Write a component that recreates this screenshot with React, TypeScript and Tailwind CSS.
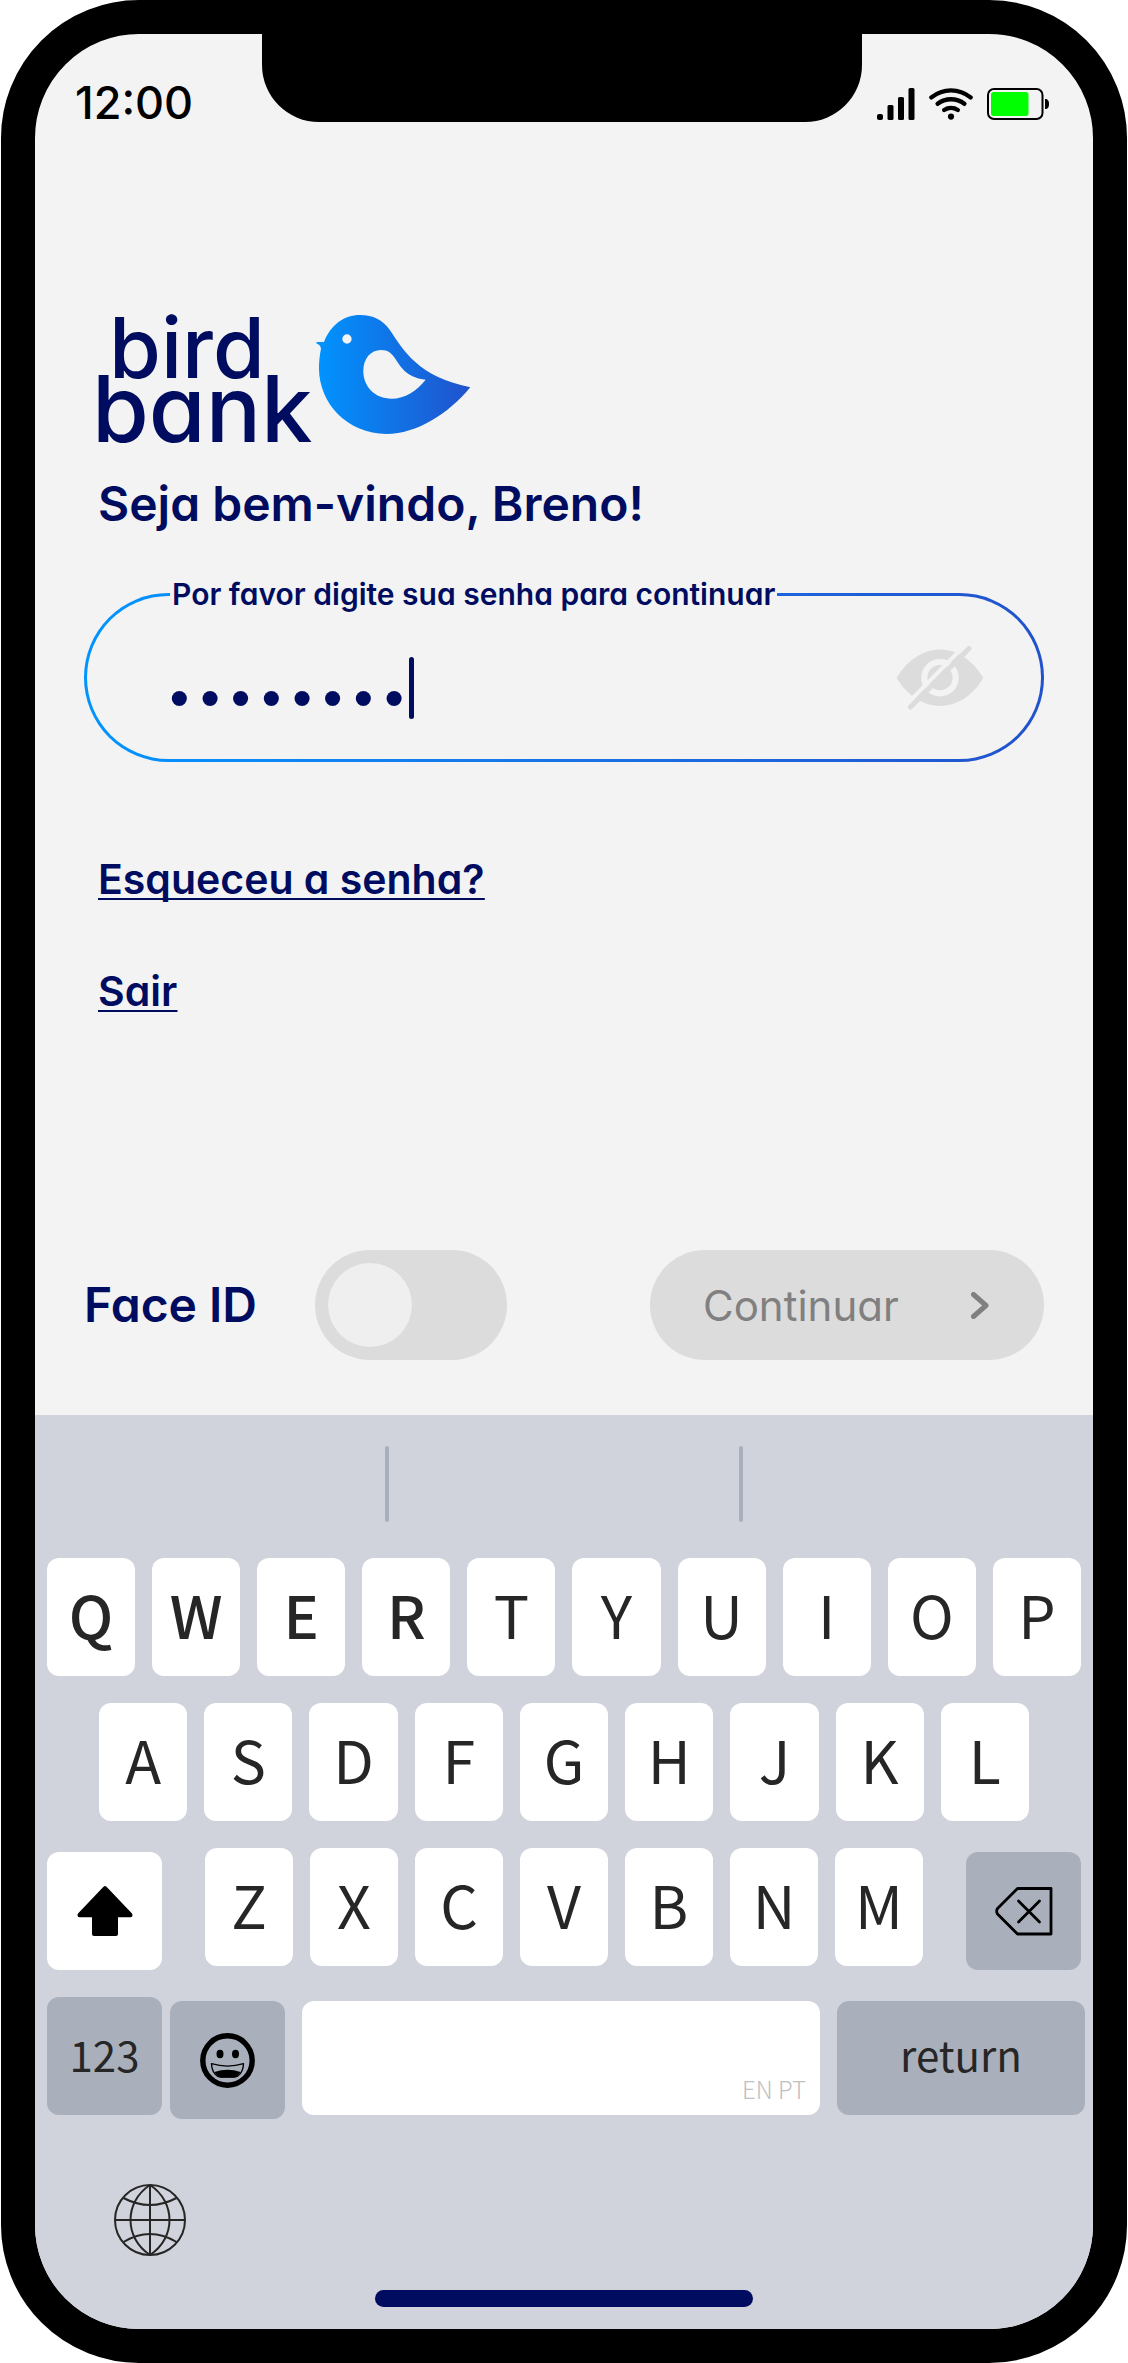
import { useState } from 'react'
import type { ReactNode } from 'react'
import clsx from 'clsx'

const ROW_1 = ['Q', 'W', 'E', 'R', 'T', 'Y', 'U', 'I', 'O', 'P']
const ROW_2 = ['A', 'S', 'D', 'F', 'G', 'H', 'J', 'K', 'L']
const ROW_3 = ['Z', 'X', 'C', 'V', 'B', 'N', 'M']
const HEAVY_KEYS = ['Q', 'W', 'E', 'R']

function SignalIcon() {
  return (
    <svg width="38" height="32" viewBox="0 0 38 32" aria-hidden="true">
      <rect x="0" y="26" width="6" height="6" rx="2" />
      <rect x="10.5" y="17" width="6" height="15" rx="1.5" />
      <rect x="21" y="9" width="6" height="23" rx="1.5" />
      <rect x="31.5" y="0" width="6" height="32" rx="1.5" />
    </svg>
  )
}

function WifiIcon() {
  return (
    <svg width="44" height="32" viewBox="0 0 44 32" fill="none" stroke="#000" strokeWidth="4.4" strokeLinecap="round" aria-hidden="true">
      <path d="M2.4 9.4C14 0 30 0 41.6 9.4" />
      <path d="M8.6 15.8c8-6 18.8-6 26.8 0" />
      <path d="M15.2 22c4-2.6 9.6-2.6 13.6 0" />
      <circle cx="22" cy="28.6" r="3.1" fill="#000" stroke="none" />
    </svg>
  )
}

function BatteryIcon() {
  return (
    <svg width="62" height="32" viewBox="0 0 62 32" aria-hidden="true">
      <rect x="1" y="1" width="54.5" height="30" rx="6" fill="none" stroke="#000" strokeWidth="2" />
      <rect x="4" y="4" width="37.5" height="24" rx="2.5" fill="#00ff00" />
      <path d="M58 11c3 0 4 2 4 5s-1 5-4 5z" />
    </svg>
  )
}

function Logo() {
  return (
    <svg width="373" height="137" viewBox="0 0 373 137" className="overflow-visible" role="img" aria-label="bird bank">
      <defs>
        <linearGradient id="bird" x1="0" y1="0" x2="1" y2="0">
          <stop offset="0" stopColor="#0094ff" />
          <stop offset="1" stopColor="#2152cc" />
        </linearGradient>
      </defs>
      <g fill="#000c5f" className="font-[Inter,sans-serif] font-medium [font-feature-settings:'cv11']">
        <text x="11" y="72" className="text-[84px]">bird</text>
        <text x="-6" y="136" className="text-[92px]">bank</text>
      </g>
      <g transform="translate(-18 -16) scale(.3333)">
        <path
          fill="url(#bird)"
          fillRule="evenodd"
          d="M709 157C716 155 724 156 732 156C752 105 792 75 840 75C880 75 908 90 928 118C972 183 1014 260 1171 292C1105 372 1010 432 920 432C802 432 717 340 717 235C717 215 719 195 723 176C722 168 717 163 709 160ZM850 243C850 206 872 180 903 180C925 180 934 189 948 209C968 240 985 262 1037 269C1010 303 975 326 935 326C885 326 850 290 850 243ZM787 147a14 14 0 1 0 28 0a14 14 0 1 0-28 0Z"
        />
      </g>
    </svg>
  )
}

function EyeOffIcon() {
  return (
    <svg width="86" height="64" viewBox="0 0 86 64" fill="none" aria-hidden="true">
      <path fill="#dcdcdc" d="M.5 33.5Q-.5 32 .5 30.5C11 13.5 27 3.5 43 3.5s32 10 42.5 27q1 1.5 0 3C75 50.5 59 60 43 60S11 50.5 .5 33.5Z" />
      <circle cx="43" cy="31.7" r="18.8" fill="#f3f3f3" />
      <circle cx="43" cy="31.7" r="12.6" fill="#dcdcdc" />
      <path stroke="#f3f3f3" strokeWidth="4" d="M9.5 58.5 69-2" />
      <path stroke="#dcdcdc" strokeWidth="5" strokeLinecap="round" d="M13.5 61 72 2.6" />
    </svg>
  )
}

function ShiftIcon() {
  return (
    <svg width="56" height="50" viewBox="0 0 56 50" aria-hidden="true">
      <path d="M26.5 .8q1.5-1.5 3 0L55 27.5q1.5 3.5-1.5 3.8H41V48q0 2-2 2H17q-2 0-2-2V31.3H2.5Q-.5 31 1 27.5Z" />
    </svg>
  )
}

function BackspaceIcon() {
  return (
    <svg width="58" height="49" viewBox="0 0 58 49" fill="none" stroke="#000" strokeWidth="2.8" strokeLinejoin="round" strokeLinecap="round" aria-hidden="true">
      <path d="M22.5 1.5H56V47H22.5L2.5 27Q.8 24.3 2.5 21.5Z" />
      <path d="m23.5 14 21 21m0-21-21 21" />
    </svg>
  )
}

function EmojiIcon() {
  return (
    <svg width="55" height="55" viewBox="0 0 55 55" aria-hidden="true">
      <circle cx="27.5" cy="27.5" r="24.7" fill="none" stroke="#000" strokeWidth="5.4" />
      <ellipse cx="20" cy="21" rx="3.5" ry="4.2" />
      <ellipse cx="35.5" cy="21" rx="3.5" ry="4.2" />
      <path fill="none" stroke="#000" strokeWidth="1.4" strokeLinejoin="round" d="M11.5 30.7Q27.5 35.5 43.5 30.7C43 40 38 44 34.5 44h-14C17 44 12 40 11.5 30.7Z" />
      <path d="M14.5 39Q27.5 34.5 40.5 39C38 43 36 44.5 33 44.5H22C19 44.5 17 43 14.5 39Z" />
    </svg>
  )
}

function GlobeIcon() {
  return (
    <svg width="72" height="72" viewBox="0 0 72 72" fill="none" stroke="#262626" strokeWidth="2" aria-hidden="true">
      <circle cx="36" cy="36" r="35" />
      <path d="M36 1v70M1 36h70" />
      <path d="M36 1C10 18 10 54 36 71M36 1c26 17 26 53 0 70" />
      <path d="M9.5 14Q36 28 62.5 14M9.5 58Q36 42 62.5 58" />
    </svg>
  )
}

type KeyProps = {
  label?: string
  className?: string
  onClick?: () => void
  children: ReactNode
}

function Key({ label, className, onClick, children }: KeyProps) {
  return (
    <button
      type="button"
      aria-label={label}
      onClick={onClick}
      className={clsx('flex items-center justify-center rounded-xl', className)}
    >
      {children}
    </button>
  )
}

function LetterKeys({ letters, onPress }: { letters: string[]; onPress: (letter: string) => void }) {
  return (
    <div className="flex min-w-0 flex-1 gap-[17px]">
      {letters.map((letter) => (
        <Key
          key={letter}
          onClick={() => onPress(letter)}
          className={clsx(
            'h-[118px] min-w-0 flex-1 bg-white pb-2 text-[59px] leading-none',
            HEAVY_KEYS.includes(letter) && 'font-medium'
          )}
        >
          {letter}
        </Key>
      ))}
    </div>
  )
}

export default function App() {
  const [password, setPassword] = useState('breno123')
  const [visible, setVisible] = useState(false)
  const [faceId, setFaceId] = useState(false)

  const press = (letter: string) => setPassword(password + letter)

  return (
    <div className="bg-white px-px pb-px font-[Inter,sans-serif] text-[#000c5f] [font-feature-settings:'cv11']">
      <div className="overflow-hidden rounded-[138px] border-[34px] border-black bg-[#f3f3f3]">
        <header className="flex h-[88px] text-black">
          <div className="flex min-w-0 flex-1 items-center pt-12 pl-10 text-[45px] leading-none font-medium">12:00</div>
          <div className="w-[600px] rounded-b-[57px] bg-black" />
          <div className="flex min-w-0 flex-1 items-center justify-end gap-[14px] pt-[52px] pr-11">
            <SignalIcon />
            <WifiIcon />
            <BatteryIcon />
          </div>
        </header>

        <main className="px-[49px] pt-[184px] pb-[55px]">
          <div className="px-[14px]">
            <Logo />
            <h1 className="mt-[33px] text-5xl leading-[56px] font-semibold">Seja bem-vindo, Breno!</h1>
          </div>

          <div className="relative mt-[61px] rounded-full bg-linear-to-r from-[#0094ff] to-[#2152cc] p-[3px]">
            <label
              htmlFor="password"
              className="absolute -top-4 left-[86px] bg-[#f3f3f3] px-[2px] text-[30px] leading-[34px] font-semibold whitespace-nowrap"
            >
              Por favor digite sua senha para continuar
            </label>
            <div className="flex h-[163px] items-center justify-between rounded-full bg-[#f3f3f3] pr-[58px] pl-[77px]">
              <div className="flex items-center pt-5">
                <input
                  id="password"
                  type={visible ? 'text' : 'password'}
                  value={password}
                  onChange={(e) => setPassword(e.target.value)}
                  className="h-[88px] bg-transparent pt-6 font-['DejaVu_Sans',sans-serif] text-[52px] caret-transparent outline-none [field-sizing:content]"
                />
                <span className="h-[62px] w-[5px] rounded-full bg-[#000c5f]" />
              </div>
              <button type="button" aria-label="Mostrar senha" onClick={() => setVisible(!visible)}>
                <EyeOffIcon />
              </button>
            </div>
          </div>

          <nav className="mt-[93px] flex flex-col items-start gap-16 px-[14px] text-[41px] leading-[48px] font-semibold underline decoration-2 underline-offset-4 [text-decoration-skip-ink:none]">
            <a href="#senha">Esqueceu a senha?</a>
            <a href="#sair">Sair</a>
          </nav>

          <div className="mt-[235px] flex items-center justify-between">
            <div className="flex items-center gap-[58px]">
              <label htmlFor="face-id" className="text-5xl leading-[56px] font-semibold">
                Face ID
              </label>
              <input
                id="face-id"
                type="checkbox"
                role="switch"
                checked={faceId}
                onChange={(e) => setFaceId(e.target.checked)}
                className="flex h-[110px] w-48 appearance-none items-center rounded-full bg-[#dcdcdc] px-[13px] before:size-[84px] before:rounded-full before:bg-[#efefef] checked:justify-end"
              />
            </div>
            <button
              type="button"
              className="flex h-[110px] w-[394px] items-center justify-between rounded-full bg-[#dcdcdc] pr-[55px] pl-[53px] text-[42px] text-[#808080]"
            >
              Continuar
              <svg width="18" height="27" viewBox="0 0 18 27" fill="none" stroke="#808080" strokeWidth="5" strokeLinecap="round" strokeLinejoin="round" aria-hidden="true">
                <path d="m2.5 2.5 12.5 11-12.5 11" />
              </svg>
            </button>
          </div>
        </main>

        <section
          aria-label="Teclado"
          className="bg-[#d0d3dc] px-3 pt-[31px] pb-[22px] font-['Noto_Sans_CJK_SC',sans-serif] text-[#262626]"
        >
          <div className="-mx-3 flex justify-evenly">
            <span className="h-[76px] w-1 rounded-full bg-[#a9afbb]" />
            <span className="h-[76px] w-1 rounded-full bg-[#a9afbb]" />
          </div>

          <div className="mt-9 flex flex-col gap-[27px]">
            <div className="flex">
              <LetterKeys letters={ROW_1} onPress={press} />
            </div>
            <div className="flex px-[52px]">
              <LetterKeys letters={ROW_2} onPress={press} />
            </div>
            <div className="flex h-[122px] gap-[43px]">
              <Key label="Shift" className="h-[118px] w-[115px] self-end bg-white">
                <ShiftIcon />
              </Key>
              <LetterKeys letters={ROW_3} onPress={press} />
              <Key
                label="Apagar"
                onClick={() => setPassword(password.slice(0, -1))}
                className="h-[118px] w-[115px] self-end bg-[#a9afbb]"
              >
                <BackspaceIcon />
              </Key>
            </div>
            <div className="-mr-1 flex h-[122px] gap-[17px] text-[42px] leading-none">
              <div className="flex gap-2">
                <Key className="h-[118px] w-[115px] bg-[#a9afbb] pb-1">123</Key>
                <Key label="Emoji" className="h-[118px] w-[115px] self-end bg-[#a9afbb]">
                  <EmojiIcon />
                </Key>
              </div>
              <button
                type="button"
                onClick={() => press(' ')}
                className="flex h-[114px] flex-1 items-end justify-end self-center rounded-xl bg-white px-[14px] pb-[14px] text-2xl leading-none font-light text-[#c0c0c0]"
              >
                EN PT
              </button>
              <Key className="h-[114px] w-[248px] self-center bg-[#a9afbb] pb-2">return</Key>
            </div>
          </div>

          <button type="button" aria-label="Idioma" className="mt-[65px] ml-[67px] block">
            <GlobeIcon />
          </button>
          <div className="mx-auto mt-[34px] h-[17px] w-[378px] rounded-full bg-[#000c5f]" />
        </section>
      </div>
    </div>
  )
}
